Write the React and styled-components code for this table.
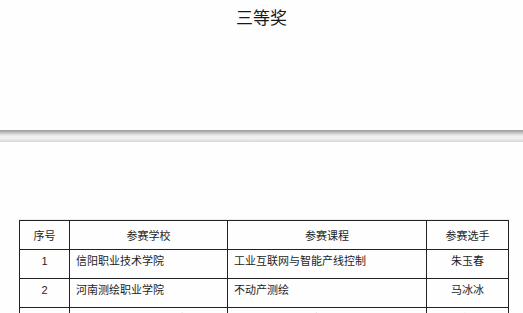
import React from 'react';
import styled, { createGlobalStyle } from 'styled-components';

const GlobalStyle = createGlobalStyle`
  html, body {
    margin: 0;
    padding: 0;
    background: #fefefe;
    font-family: "Liberation Sans", "Noto Sans CJK SC", sans-serif;
    color: #222;
  }
`;

const Page = styled.div`
  width: 523px;
  height: 313px;
  overflow: hidden;
  display: flex;
  flex-direction: column;
`;

const TitleArea = styled.header`
  flex-shrink: 0;
  height: 130px;
  display: flex;
  justify-content: center;
  padding-top: 8px;
  box-sizing: border-box;
`;

const Title = styled.h2`
  margin: 0;
  font-size: 17px;
  font-weight: normal;
  line-height: 22px;
  color: #1a1a1a;
`;

const Divider = styled.div`
  flex-shrink: 0;
  height: 12px;
  background: linear-gradient(
    to bottom,
    #9b9b9b 0%,
    #b8b8b8 18%,
    #dcdcde 35%,
    #f2f2f4 55%,
    #eeeef0 75%,
    #d6d6da 100%
  );
`;

const Section = styled.section`
  flex-shrink: 0;
  padding: 78px 0 0 19px;
`;

const Table = styled.table`
  border-collapse: collapse;
  width: 489px;
  table-layout: fixed;
  font-size: 11px;
  color: #1e1e1e;
  box-shadow: 0 -1px 0 #ececec;
`;

const Row = styled.tr`
  height: 29px;
`;

const Th = styled.th`
  border: 1px solid #222;
  font-weight: normal;
  padding: 0 4px;
  text-align: center;
  vertical-align: middle;
`;

const Td = styled.td`
  border: 1px solid #222;
  padding: 4px 6px 0;
  vertical-align: top;
  line-height: 14px;
  text-align: ${p => (p.$center ? 'center' : 'left')};
`;

const rows = [
  ['1', '信阳职业技术学院', '工业互联网与智能产线控制', '朱玉春'],
  ['2', '河南测绘职业学院', '不动产测绘', '马冰冰'],
  ['3', '河南工业职业技术学院', 'PLC控制技术及应用', '李艳芳'],
];

export default function App() {
  return (
    <>
      <GlobalStyle />
      <Page>
        <TitleArea>
          <Title>三等奖</Title>
        </TitleArea>
        <Divider />
        <Section>
          <Table>
            <colgroup>
              <col style={{ width: 50 }} />
              <col style={{ width: 158 }} />
              <col style={{ width: 199 }} />
              <col style={{ width: 82 }} />
            </colgroup>
            <thead>
              <Row>
                <Th>序号</Th>
                <Th>参赛学校</Th>
                <Th>参赛课程</Th>
                <Th>参赛选手</Th>
              </Row>
            </thead>
            <tbody>
              {rows.map(r => (
                <Row key={r[0]}>
                  <Td $center>{r[0]}</Td>
                  <Td>{r[1]}</Td>
                  <Td>{r[2]}</Td>
                  <Td $center>{r[3]}</Td>
                </Row>
              ))}
            </tbody>
          </Table>
        </Section>
      </Page>
    </>
  );
}
